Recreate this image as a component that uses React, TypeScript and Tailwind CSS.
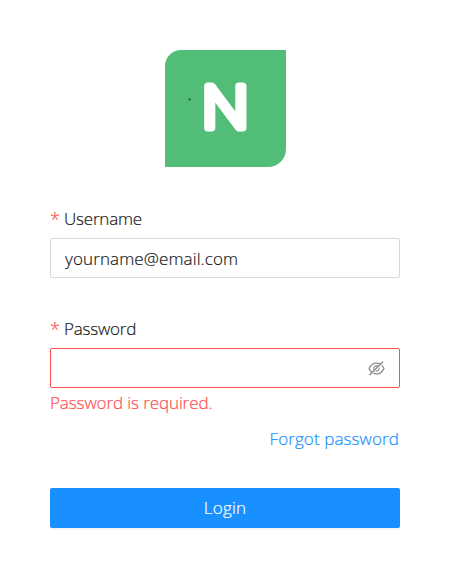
import { AiOutlineEyeInvisible } from 'react-icons/ai'

function Logo() {
  return (
    <svg width="121" height="117" viewBox="0 0 121 117" className="mx-auto block">
      <path d="M16 0H121V99A18 18 0 0 1 103 117H0V16A16 16 0 0 1 16 0Z" fill="#51bd76" />
      <rect x="23.5" y="48.5" width="2" height="2" fill="#1f5a36" />
      <text
        transform="translate(36.4 78.4) scale(1.13 1)"
        fontSize="58.5"
        fontWeight="300"
        fill="#fff"
        stroke="#fff"
        strokeWidth="7"
        strokeLinejoin="round"
        fontFamily="Open Sans, sans-serif"
      >
        N
      </text>
    </svg>
  )
}

function Label({ htmlFor, text }: { htmlFor: string; text: string }) {
  return (
    <label htmlFor={htmlFor} className="flex h-[38px] items-center text-[17px] tracking-[-0.2px] text-[#1a1a1a]">
      <span className="mr-1.5 w-2 text-[18px] text-[#ff4d4f]">*</span>
      {text}
    </label>
  )
}

export default function App() {
  return (
    <main className="h-[588px] w-[450px] bg-white px-[50px] pt-[50px] font-['Open_Sans','Noto_Sans',sans-serif] font-light leading-6">
      <Logo />
      <form className="mt-[33px] [-webkit-text-stroke-width:0.2px]" onSubmit={(e) => e.preventDefault()}>
        <Label htmlFor="username" text="Username" />
        <input
          id="username"
          type="text"
          defaultValue="yourname@email.com"
          className="block h-10 w-full rounded-[2px] border border-[#d9d9d9] px-3.5 text-[17px] tracking-[0.12px] text-[#1a1a1a] outline-none [-webkit-text-stroke-width:0.2px]"
        />

        <div className="mt-8">
          <Label htmlFor="password" text="Password" />
          <div className="flex h-10 items-center rounded-[2px] border border-[#ff4d4f] pl-3.5 pr-[13px]">
            <input id="password" type="password" className="min-w-0 flex-1 outline-none" />
            <AiOutlineEyeInvisible className="size-[19px] text-[#8c8c8c]" />
          </div>
          <p className="mt-[3px] text-[17px] tracking-[-0.1px] text-[#ff4d4f]">Password is required.</p>
        </div>

        <div className="mt-3 pr-px text-right">
          <a href="#" className="text-[17px] tracking-[0.1px] text-[#1890ff]">Forgot password</a>
        </div>

        <button
          type="submit"
          className="mt-[37px] block h-10 w-full rounded-[2px] bg-[#1890ff] text-[17px] tracking-[0.2px] text-white shadow-[0_2px_0_rgba(0,0,0,0.045)] [-webkit-text-stroke-width:0.2px]"
        >
          Login
        </button>
      </form>
    </main>
  )
}
